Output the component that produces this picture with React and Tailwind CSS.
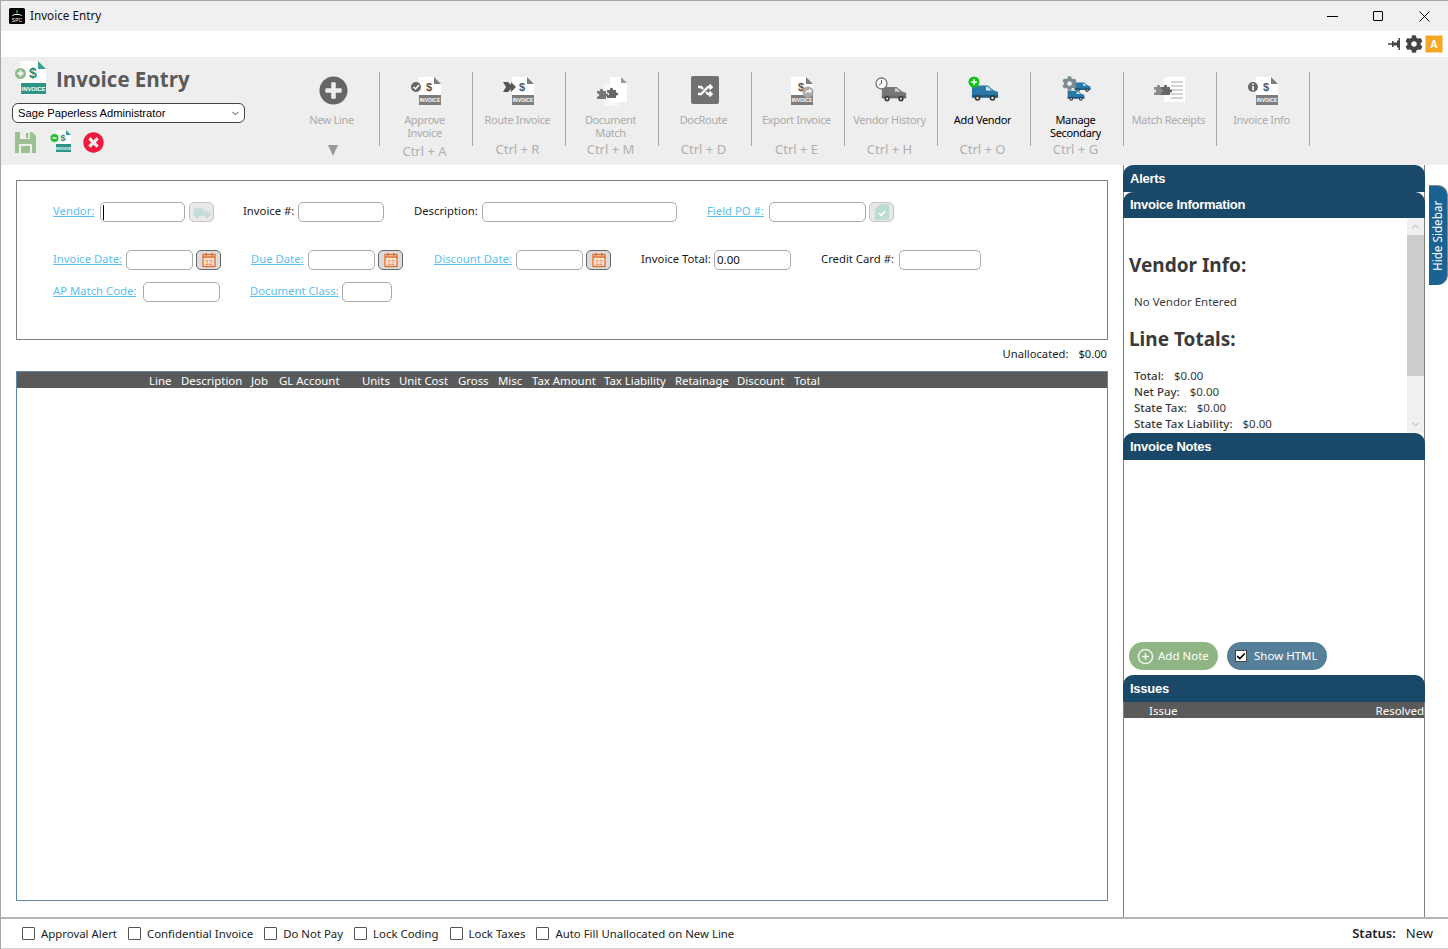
import React from 'react'
import { FaCog, FaPlusCircle, FaRandom, FaTimesCircle } from 'react-icons/fa'
import { ChevronDown, ChevronUp, CirclePlus, Check } from 'lucide-react'

// --- drawn icons ---

const Puzzle = ({ x = 0, y = 0, c = '#777', s = 1 }) => (
  <g transform={`translate(${x} ${y}) scale(${s})`}>
    <path d="M0 3h3a1.6 1.6 0 1 1 3 0h3v2.5a1.6 1.6 0 1 1 0 3V11H0V8.500a1.600 1.600 0 1 0 0-3z" fill={c} />
  </g>
)

const InvoiceDoc = ({ c = '#7d7d7d', textC = '#555', badge, size = 32 }) => (
  <svg width={size} height={size} viewBox="0 0 32 32">
    <path d="M9 1h15l7 7v21H9z" fill="#fff" />
    <path d="M24 1l7 7h-7z" fill={c} />
    <rect x="9" y="19" width="22" height="10" fill={c} />
    <text x="19" y="15" fontSize="11" fontWeight="700" textAnchor="middle" fill={textC} fontFamily="Liberation Sans, sans-serif">$</text>
    <text x="20" y="26.300" fontSize="5" fontWeight="700" textAnchor="middle" fill="#fff" fontFamily="Liberation Sans, sans-serif">INVOICE</text>
    {badge}
  </svg>
)

const Van = ({ body = '#777', dark = '#555', win = '#ddd', wheel = '#333', hub = '#ddd', w = 30, h = 20 }) => (
  <svg width={w} height={h} viewBox="0 0 30 20">
    <path d="M1 3h17l6 5 5 2v6H1z" fill={body} />
    <path d="M1 13h28v3H1z" fill={dark} />
    <path d="M18 4.500l4.500 4H16v-4z" fill={win} />
    <circle cx="7" cy="16.500" r="3" fill={wheel} />
    <circle cx="7" cy="16.500" r="1.300" fill={hub} />
    <circle cx="23" cy="16.500" r="3" fill={wheel} />
    <circle cx="23" cy="16.500" r="1.300" fill={hub} />
  </svg>
)

const ApproveIcon = () => (
  <InvoiceDoc badge={<g><circle cx="6" cy="11" r="5" fill="#666" /><path d="M3.500 11l2 2 3.500-4" stroke="#fff" strokeWidth="1.500" fill="none" /></g>} />
)

const RouteIcon = () => (
  <InvoiceDoc badge={<path d="M0 6h5l3 3 0-3 5 5-5 5 0-3-3 3H0l3-5z" fill="#555" />} />
)

const DocMatchIcon = () => (
  <svg width="32" height="32" viewBox="0 0 32 32">
    <path d="M8 8h14v22H8z" fill="#f8f8f8" />
    <path d="M14 1h11l6 6v19H14z" fill="#fff" />
    <path d="M25 1l6 6h-6z" fill="#999" />
    <Puzzle x={1} y={12} c="#777" />
    <Puzzle x={11} y={11} c="#666" />
  </svg>
)

const DocRouteIcon = () => (
  <div className="w-[28px] h-[28px] rounded-[2px] bg-[#707070] flex items-center justify-center">
    <FaRandom className="text-white text-[15px]" />
  </div>
)

const ExportIcon = () => (
  <InvoiceDoc badge={<g><circle cx="26" cy="16" r="5.500" fill="#aaa" /><path d="M23 18c0-3 2-4 4-4v-1.500l3 2.500-3 2.500V16c-2 0-3 .5-4 2z" fill="#fff" /></g>} />
)

const HistoryIcon = () => (
  <div className="relative w-[32px] h-[30px]">
    <div className="absolute left-[6px] top-[8px]"><Van body="#777" dark="#666" win="#ccc" w={26} h={18} /></div>
    <svg className="absolute left-0 top-[1px]" width="13" height="13" viewBox="0 0 13 13">
      <circle cx="6.500" cy="6.500" r="5.500" fill="#fff" stroke="#777" strokeWidth="1.300" />
      <path d="M6.500 3v3.500l-2.500 1" stroke="#666" fill="none" />
    </svg>
  </div>
)

const AddVendorIcon = () => (
  <div className="relative w-[32px] h-[30px]">
    <div className="absolute left-[3px] top-[6px]"><Van body="#2a78a8" dark="#1f5d85" win="#cfe6f2" w={28} h={20} /></div>
    <svg className="absolute left-0 top-0" width="12" height="12" viewBox="0 0 12 12">
      <circle cx="6" cy="6" r="5.500" fill="#12c212" />
      <path d="M6 3v6M3 6h6" stroke="#fff" strokeWidth="1.500" />
    </svg>
  </div>
)

const SecondaryIcon = () => (
  <div className="relative w-[30px] h-[30px]">
    <div className="absolute left-[12px] top-[4px]"><Van body="#2a78a8" dark="#1f5d85" win="#cfe6f2" w={17} h={13} /></div>
    <div className="absolute left-[5px] top-[12px]"><Van body="#2a78a8" dark="#1f5d85" win="#cfe6f2" w={18} h={14} /></div>
    <FaCog className="absolute left-0 top-0 text-[#7d8b93] text-[15px]" />
  </div>
)

const ReceiptIcon = () => (
  <svg width="32" height="32" viewBox="0 0 32 32">
    <path d="M10 1h21v25H10z" fill="#fff" />
    <path d="M17 6h12M17 10h12M17 14h12M17 18h12M17 22h12" stroke="#a5a5a5" />
    <Puzzle x={0} y={8} c="#8a8a8a" />
    <Puzzle x={7} y={8} c="#666" />
  </svg>
)

const InfoIcon = () => (
  <InvoiceDoc badge={<g><circle cx="6" cy="11" r="5" fill="#666" /><path d="M6 7.500v1.500M6 10v4.500" stroke="#fff" strokeWidth="1.600" /></g>} />
)

const CalendarButton = () => (
  <div className="w-[25px] h-[20px] rounded-[5px] border border-[#666] bg-[#dcdcdc] flex items-center justify-center">
    <svg width="16" height="16" viewBox="0 0 16 16">
      <rect x="2" y="2.500" width="12" height="12" fill="#fbe3d4" stroke="#e06c2a" strokeWidth="1.300" />
      <path d="M2 5h12M5 1v3M11 1v3" stroke="#e06c2a" strokeWidth="1.500" />
      <text x="8" y="13" fontSize="7" textAnchor="middle" fill="#e06c2a" fontFamily="Liberation Sans, sans-serif">12</text>
    </svg>
  </div>
)

const LookupButton = ({ children }) => (
  <div className="w-[25px] h-[20px] rounded-[5px] border border-[#c4c4c4] bg-[#e8e8e8] flex items-center justify-center">
    {children}
  </div>
)

// --- data ---

const toolbarButtons = [
  { icon: <ApproveIcon />, lines: ['Approve', 'Invoice'], shortcut: 'Ctrl + A', low: true },
  { icon: <RouteIcon />, lines: ['Route Invoice'], shortcut: 'Ctrl + R' },
  { icon: <DocMatchIcon />, lines: ['Document', 'Match'], shortcut: 'Ctrl + M' },
  { icon: <DocRouteIcon />, lines: ['DocRoute'], shortcut: 'Ctrl + D' },
  { icon: <ExportIcon />, lines: ['Export Invoice'], shortcut: 'Ctrl + E' },
  { icon: <HistoryIcon />, lines: ['Vendor History'], shortcut: 'Ctrl + H' },
  { icon: <AddVendorIcon />, lines: ['Add Vendor'], shortcut: 'Ctrl + O', enabled: true },
  { icon: <SecondaryIcon />, lines: ['Manage', 'Secondary', 'Vendors'], shortcut: 'Ctrl + G', enabled: true },
  { icon: <ReceiptIcon />, lines: ['Match Receipts'] },
  { icon: <InfoIcon />, lines: ['Invoice Info'] },
]

const gridColumns = [
  { name: 'Line', cls: 'w-[32px]' },
  { name: 'Description', cls: 'w-[70px]' },
  { name: 'Job', cls: 'w-[28px]' },
  { name: 'GL Account', cls: 'w-[83px]' },
  { name: 'Units', cls: 'w-[37px]' },
  { name: 'Unit Cost', cls: 'w-[59px]' },
  { name: 'Gross', cls: 'w-[40px]' },
  { name: 'Misc', cls: 'w-[34px]' },
  { name: 'Tax Amount', cls: 'w-[72px]' },
  { name: 'Tax Liability', cls: 'w-[71px]' },
  { name: 'Retainage', cls: 'w-[62px]' },
  { name: 'Discount', cls: 'w-[57px]' },
  { name: 'Total', cls: 'w-[40px]' },
]

const footerChecks = ['Approval Alert', 'Confidential Invoice', 'Do Not Pay', 'Lock Coding', 'Lock Taxes', 'Auto Fill Unallocated on New Line']

const lineTotals = [
  ['Total:', '$0.00'],
  ['Net Pay:', '$0.00'],
  ['State Tax:', '$0.00'],
  ['State Tax Liability:', '$0.00'],
]

// --- small pieces ---

const FieldLink = ({ children, cls }) => (
  <span className={`${cls} -mt-[2px] text-[#5cc1f0] text-[11.3px] underline whitespace-nowrap`}>{children}</span>
)

const FieldLabel = ({ children, cls }) => (
  <span className={`${cls} -mt-[2px] text-[#1a1a1a] text-[11.3px] whitespace-nowrap`}>{children}</span>
)

const TextBox = ({ cls, children }) => (
  <div className={`${cls} h-[20px] rounded-[5px] border border-[#a9a9a9] bg-white px-[2px] flex items-center text-[#111] leading-none`}>
    {children}
  </div>
)

const PanelHeader = ({ children, cls }) => (
  <div className={`${cls} rounded-t-[10px] bg-[#1a4869] pl-[7px] flex items-center text-white font-bold text-[13px] tracking-[-0.25px] font-['Liberation_Sans',sans-serif]`}>
    {children}
  </div>
)

const ToolButton = ({ icon, lines, shortcut, enabled, low }) => (
  <div className="w-[93px] h-[74px] border-r border-[#a8a8a8] flex flex-col items-center">
    <div className="h-[41px] shrink-0 pt-[4px] flex items-start justify-center">{icon}</div>
    <div className={`h-[29px] shrink-0 overflow-hidden text-center text-[11px] tracking-[-0.35px] leading-[13px] mr-[3px] ${enabled ? 'text-black' : 'text-[#ababab]'}`}>
      {lines.map(l => <div key={l} className="whitespace-nowrap">{l}</div>)}
    </div>
    {shortcut && <div className={`shrink-0 text-[13px] leading-none text-[#b0b0b0] whitespace-nowrap mr-[3px] ${low ? 'mt-[3px]' : 'mt-[1px]'}`}>{shortcut}</div>}
  </div>
)

export default function App() {
  return (
    <div className="w-[1448px] h-[949px] overflow-hidden bg-white flex flex-col border-l border-t border-[#a6a6a6] font-['Noto_Sans',sans-serif] text-[11.5px]">
      {/* Title bar */}
      <div className="h-[30px] shrink-0 bg-[#f0f0f0] flex items-center pl-[8px] text-[#111]">
        <svg width="16" height="16" viewBox="0 0 16 16">
          <rect width="16" height="16" rx="1.500" fill="#000" />
          <path d="M2.500 8c3-3 8-3 11 0-3-1.500-8-1.500-11 0z" fill="#fff" />
          <rect x="7.300" y="2" width="1.400" height="3" fill="#2fae5f" />
          <text x="8" y="14" fontSize="5" textAnchor="middle" fill="#fff" fontFamily="Liberation Sans, sans-serif">SPC</text>
        </svg>
        <span className="ml-[5px] text-[11.7px]">Invoice Entry</span>
        <div className="ml-auto flex items-center pr-[1px]">
          <div className="w-[46px] flex justify-center"><span className="w-[11px] h-px bg-black" /></div>
          <div className="w-[46px] flex justify-center"><span className="w-[10px] h-[10px] border border-black rounded-[1px]" /></div>
          <div className="w-[46px] flex justify-center">
            <svg width="11" height="11" viewBox="0 0 11 11"><path d="M.5.5l10 10M10.500.5l-10 10" stroke="#000" /></svg>
          </div>
        </div>
      </div>

      {/* Top strip */}
      <div className="h-[26px] shrink-0 bg-white flex items-center justify-end pr-[5px]">
        <svg width="13" height="12" viewBox="0 0 13 12" className="mr-[4px]">
          <path d="M0 5.300h4V6.700H0zM4 3h1.500v1.500H9V2.500h1.500V0H12v12h-1.500V9.500H9v-2H5.500V9H4z" fill="#444" />
        </svg>
        <FaCog className="text-[#444] text-[18px]" />
        <div className="ml-[2px] w-[18px] h-[18px] bg-[#f5a623] border border-[#fbd38a] flex items-center justify-center text-white text-[10px] font-bold">A</div>
      </div>

      {/* Toolbar */}
      <div className="h-[108px] shrink-0 bg-[#eeeeee] flex">
        <div className="w-[286px] shrink-0 pl-[11px]">
          <div className="h-[46px] flex items-start pl-[2px] pt-[4px]">
            <svg width="34" height="34" viewBox="0 0 34 34">
              <path d="M6 0h18l8 8v26H6z" fill="#fff" />
              <path d="M24 0l8 8h-8z" fill="#38a090" />
              <rect x="7" y="22" width="25" height="11" fill="#2f9488" />
              <text x="19" y="17" fontSize="14" fontWeight="700" textAnchor="middle" fill="#1f8a7e" fontFamily="Liberation Sans, sans-serif">$</text>
              <text x="19.500" y="30" fontSize="5.800" fontWeight="700" textAnchor="middle" fill="#fff" fontFamily="Liberation Sans, sans-serif">INVOICE</text>
              <circle cx="6.500" cy="12.500" r="5.500" fill="#8fb98a" />
              <path d="M6.500 9.500v6M3.500 12.500h6" stroke="#fff" strokeWidth="1.800" />
            </svg>
            <span className="ml-[8px] text-[20.5px] leading-[36px] font-bold text-[#5a5a5a] font-['Open_Sans',sans-serif]">Invoice Entry</span>
          </div>
          <div className="w-[233px] h-[20px] rounded-[6px] border border-[#444] bg-white flex items-center pl-[5px] pr-[3px] text-[11.2px] text-black font-['Liberation_Sans',sans-serif]">
            Sage Paperless Administrator
            <ChevronDown size={11} className="ml-auto text-[#333]" />
          </div>
          <div className="flex items-center mt-[9px] h-[21px] pl-[3px]">
            <svg width="21" height="21" viewBox="0 0 21 21">
              <path d="M0 0h17l4 4v17H0z" fill="#9cc092" />
              <rect x="5" y="0" width="10" height="7" fill="#eeeeee" />
              <rect x="11" y="1" width="2.500" height="5" fill="#9cc092" />
              <rect x="4" y="12" width="13" height="9" fill="#eeeeee" />
              <rect x="6" y="14" width="9" height="7" fill="#9cc092" />
            </svg>
            <div className="ml-[14px] -mt-[3px]">
              <svg width="22" height="24" viewBox="0 0 22 24">
                <path d="M6 1h10l5 5v17H6z" fill="#fff" />
                <path d="M16 1l5 5h-5z" fill="#38a090" />
                <rect x="6" y="15" width="15" height="8" fill="#2f9488" />
                <text x="13" y="12" fontSize="9" fontWeight="700" textAnchor="middle" fill="#1f8a7e" fontFamily="Liberation Sans, sans-serif">$</text>
                <text x="13.500" y="21" fontSize="3.600" fontWeight="700" textAnchor="middle" fill="#fff" fontFamily="Liberation Sans, sans-serif">INVOICE</text>
                <circle cx="4.500" cy="9" r="4" fill="#22c32a" />
                <path d="M2.500 9h4" stroke="#fff" strokeWidth="1.500" />
              </svg>
            </div>
            <FaTimesCircle className="ml-[11px] text-[#f0183c] text-[21px]" />
          </div>
        </div>

        <div className="flex pt-[15px]">
          <div className="w-[93px] h-[74px] border-r border-[#a8a8a8] flex flex-col items-center">
            <div className="h-[41px] shrink-0 pt-[4px]"><FaPlusCircle className="text-[#666] text-[29px]" /></div>
            <div className="h-[29px] shrink-0 text-[11px] tracking-[-0.35px] leading-[13px] text-[#ababab] mr-[3px]">New Line</div>
            <div className="shrink-0 mt-[3px] w-0 h-0 border-x-[5.5px] border-x-transparent border-t-[11px] border-t-[#999]" />
          </div>
          {toolbarButtons.map(b => <ToolButton key={b.lines[0]} {...b} />)}
        </div>
      </div>

      {/* Body */}
      <div className="flex-1 min-h-0 flex">
        <div className="w-[1122px] shrink-0 pl-[15px] pr-[15px] pt-[15px] pb-[16px] flex flex-col">
          {/* Invoice form */}
          <div className="h-[160px] shrink-0 border border-[#808080] pt-[21px] flex flex-col">
            <div className="flex items-center h-[20px] pl-[36px]">
              <FieldLink cls="w-[47px]">Vendor:</FieldLink>
              <TextBox cls="w-[85px] border-[#5a9bd8]"><span className="w-px h-[15px] bg-black" /></TextBox>
              <div className="ml-[4px]"><LookupButton><Van body="#c5dbd8" dark="#c5dbd8" win="#e8e8e8" wheel="#c5dbd8" hub="#c5dbd8" w={18} h={13} /></LookupButton></div>
              <FieldLabel cls="ml-[29px] w-[55px]">Invoice #:</FieldLabel>
              <TextBox cls="w-[86px]" />
              <FieldLabel cls="ml-[30px] w-[68px]">Description:</FieldLabel>
              <TextBox cls="w-[195px]" />
              <FieldLink cls="ml-[30px] w-[62px]">Field PO #:</FieldLink>
              <TextBox cls="w-[97px]" />
              <div className="ml-[3px]">
                <LookupButton>
                  <svg width="14" height="16" viewBox="0 0 14 16"><path d="M5 0h9v16H0V5z" fill="#bcdcd6" /><path d="M4 9l2.500 2.500L10 7" stroke="#fff" strokeWidth="1.500" fill="none" /></svg>
                </LookupButton>
              </div>
            </div>
            <div className="flex items-center h-[20px] pl-[36px] mt-[28px]">
              <FieldLink cls="w-[73px]">Invoice Date:</FieldLink>
              <TextBox cls="w-[67px]" />
              <div className="ml-[3px]"><CalendarButton /></div>
              <FieldLink cls="ml-[30px] w-[57px]">Due Date:</FieldLink>
              <TextBox cls="w-[67px]" />
              <div className="ml-[3px]"><CalendarButton /></div>
              <FieldLink cls="ml-[31px] w-[82px]">Discount Date:</FieldLink>
              <TextBox cls="w-[67px]" />
              <div className="ml-[3px]"><CalendarButton /></div>
              <FieldLabel cls="ml-[30px] w-[73px]">Invoice Total:</FieldLabel>
              <TextBox cls="w-[77px]">0.00</TextBox>
              <FieldLabel cls="ml-[30px] w-[78px]">Credit Card #:</FieldLabel>
              <TextBox cls="w-[82px]" />
            </div>
            <div className="flex items-center h-[20px] pl-[36px] mt-[12px]">
              <FieldLink cls="w-[90px]">AP Match Code:</FieldLink>
              <TextBox cls="w-[77px]" />
              <FieldLink cls="ml-[30px] w-[92px]">Document Class:</FieldLink>
              <TextBox cls="w-[50px]" />
            </div>
          </div>

          <div className="h-[31px] shrink-0 flex items-start justify-end pt-[6px] pr-[1px] text-[#1a1a1a] text-[11.2px] leading-[16px]">
            Unallocated:<span className="ml-[10px]">$0.00</span>
          </div>

          {/* Lines grid */}
          <div className="flex-1 min-h-0 border border-[#5f86ad]">
            <div className="h-[16px] pt-[1px] bg-[#5a5a5a] flex items-center pl-[132px] text-white text-[11.4px] leading-none">
              {gridColumns.map(c => (
                <span key={c.name} className={`${c.cls} whitespace-nowrap`}>{c.name}</span>
              ))}
            </div>
          </div>
        </div>

        {/* Sidebar */}
        <div className="w-[302px] shrink-0 border-x border-[#808080] flex flex-col">
          <PanelHeader cls="h-[27px] shrink-0 -mx-px">Alerts</PanelHeader>
          <PanelHeader cls="h-[26px] shrink-0 -mx-px">Invoice Information</PanelHeader>
          <div className="h-[215px] shrink-0 flex overflow-hidden">
            <div className="flex-1 pl-[5px] text-[#3a3a3a]">
              <div className="mt-[32px] text-[19px] leading-[30px] font-bold">Vendor Info:</div>
              <div className="mt-[14px] ml-[5px] text-[11.5px] leading-[16px]">No Vendor Entered</div>
              <div className="mt-[14px] text-[19px] leading-[30px] font-bold">Line Totals:</div>
              <div className="mt-[14px] ml-[5px] text-[11.5px] leading-[16px]">
                {lineTotals.map(([label, value]) => (
                  <div key={label} className="flex">
                    <span className="font-medium">{label}</span>
                    <span className="ml-[10px]">{value}</span>
                  </div>
                ))}
              </div>
            </div>
            <div className="w-[17px] shrink-0 bg-[#f0f0f0] flex flex-col">
              <div className="h-[17px] flex items-center justify-center"><ChevronUp size={11} className="text-[#a0a0a0]" /></div>
              <div className="h-[141px] bg-[#cdcdcd]" />
              <div className="h-[40px]" />
              <div className="h-[17px] flex items-center justify-center"><ChevronDown size={11} className="text-[#a0a0a0]" /></div>
            </div>
          </div>
          <PanelHeader cls="h-[27px] shrink-0 -mx-px">Invoice Notes</PanelHeader>
          <div className="flex-1 min-h-0 flex flex-col">
            <div className="h-[182px] shrink-0" />
            <div className="flex items-center pl-[5px] h-[28px] shrink-0 text-white text-[11.5px]">
              <div className="w-[89px] h-[28px] rounded-[14px] bg-[#8fb585] flex items-center pl-[8px]">
                <CirclePlus size={17} strokeWidth={2.200} className="text-[#eef4ea]" />
                <span className="ml-[4px]">Add Note</span>
              </div>
              <div className="ml-[9px] w-[100px] h-[28px] rounded-[14px] bg-[#568099] flex items-center pl-[8px]">
                <div className="w-[12px] h-[12px] bg-white border border-[#444] flex items-center justify-center">
                  <Check size={11} strokeWidth={4} className="text-black" />
                </div>
                <span className="ml-[7px]">Show HTML</span>
              </div>
            </div>
            <PanelHeader cls="h-[27px] shrink-0 -mx-px mt-[5px]">Issues</PanelHeader>
            <div className="h-[16px] pt-[1px] shrink-0 bg-[#5a5a5a] flex items-center justify-between pl-[25px] text-white text-[11.5px] leading-none">
              <span>Issue</span>
              <span>Resolved</span>
            </div>
          </div>
        </div>

        {/* Sidebar toggle */}
        <div className="flex-1 pt-[20px] flex justify-end">
          <div className="w-[19px] h-[100px] rounded-l-[10px] border-l border-b border-[#888] bg-[#1a6291] flex items-center justify-center text-white text-[11.7px] [writing-mode:vertical-rl] rotate-180">
            Hide Sidebar
          </div>
        </div>
      </div>

      {/* Footer */}
      <div className="h-[32px] shrink-0 border-t-2 border-b border-t-[#b4b4b4] border-b-[#d0d0d0] bg-white flex items-center pt-[1px] pl-[21px] pr-[15px] text-[#222] text-[11.4px]">
        {footerChecks.map(label => (
          <div key={label} className="flex items-center mr-[11px]">
            <span className="w-[13px] h-[13px] border border-[#555] rounded-[1px]" />
            <span className="ml-[6px] whitespace-nowrap">{label}</span>
          </div>
        ))}
        <div className="ml-auto text-[13px] text-[#222]">
          <span className="font-semibold">Status:</span>
          <span className="ml-[10px]">New</span>
        </div>
      </div>
    </div>
  )
}
